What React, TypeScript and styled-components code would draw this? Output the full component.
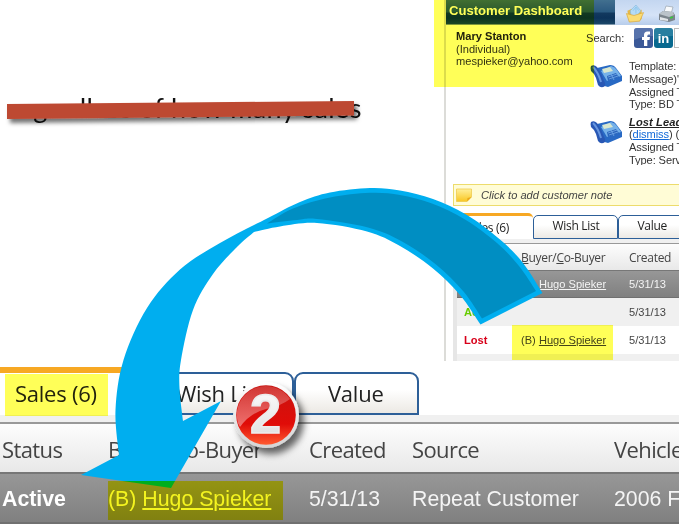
import React from "react";
import styled, { createGlobalStyle } from "styled-components";

const Global = createGlobalStyle`
  html, body { margin: 0; padding: 0; background: #fff; overflow: hidden; }
  * { box-sizing: border-box; }
`;

const arial = `"Liberation Sans", Arial, sans-serif`;
const segoe = `"Open Sans", "Noto Sans", sans-serif`;

const Page = styled.main`
  position: relative;
  width: 679px;
  height: 525px;
  overflow: hidden;
  background: #fff;
  display: flex;
  flex-direction: column;
  isolation: isolate;
  font-family: ${arial};
  white-space: nowrap;
`;

const Upper = styled.section`
  display: flex;
  height: 361px;
  flex: none;
`;

const Caption = styled.div`
  width: 444px;
  flex: none;
  padding: 91px 0 0 9px;
  font: 27px/34px Lato, sans-serif;
  letter-spacing: 0.35px;
  color: #111;
`;

const Dashboard = styled.div`
  width: 235px;
  flex: none;
  overflow: hidden;
  border-left: 2px solid #dcdcd8;
  font-size: 11.1px;
  color: #333;
`;

const TitleBar = styled.header`
  display: flex;
  height: 25px;
`;

const Title = styled.h1`
  margin: 0;
  width: 169px;
  padding-left: 3px;
  font-size: 13.1px;
  line-height: 21px;
  color: #fff;
  background: linear-gradient(#41708f 0, #3a678a 4px, #2a5a80 12px, #12395f 13px, #0c335a 18px, #1a4668 24px, #dfe6ec 25px);
`;

const Toolbar = styled.div`
  flex: 1;
  display: flex;
  gap: 13px;
  padding: 5px 0 0 10px;
  background: linear-gradient(#c3d6f0, #d5e3f7 60%, #b7cdeb);
  svg { flex: none; }
`;

const Details = styled.div`
  display: flex;
  height: 140px;
  overflow: hidden;
`;

const Contact = styled.div`
  width: 140px;
  padding: 5px 0 0 10px;
  line-height: 12.7px;
  strong { color: #222; }
`;

const Activity = styled.div`
  width: 93px;
`;

const SearchLine = styled.div`
  display: flex;
  height: 33px;
  padding-top: 3px;
  gap: 1px;
  line-height: 20px;
  span { width: 47px; flex: none; }
  svg { flex: none; }
`;

const SearchInput = styled.div`
  width: 20px;
  flex: none;
  height: 20px;
  border: 1px solid #bbb;
  background: #fff;
`;

const Task = styled.div`
  display: flex;
  gap: 6px;
  height: 55.5px;
  padding-left: 4px;
  svg { margin-top: 6px; flex: none; }
`;

const TaskLines = styled.div`
  line-height: 12.8px;
  padding-top: 2px;
  letter-spacing: -0.1px;
  div { height: 12.8px; }
  b { color: #222; font-style: italic; text-decoration: underline; letter-spacing: 0.1px; }
  a { color: #1269d8; text-decoration: underline; }
`;

const Note = styled.div`
  display: flex;
  align-items: center;
  gap: 9px;
  height: 22px;
  margin: 19px -2px 0 7px;
  padding-left: 2px;
  border: 1px solid #eddc6c;
  background: #fffcd6;
  font-style: italic;
  color: #444;
`;

const Records = styled.div`
  margin: 7px 0 0 7px;
  height: 148px;
  overflow: hidden;
`;

const Tabs = styled.div<{ $large?: boolean }>`
  display: flex;
  align-items: flex-end;
  height: ${(p) => (p.$large ? 48 : 26)}px;
  font-family: ${segoe};
  font-size: ${(p) => (p.$large ? 22 : 12)}px;
  letter-spacing: ${(p) => (p.$large ? -0.25 : -0.3)}px;
  color: #222;
`;

const Tab = styled.div<{ $w: number; $active?: boolean; $large?: boolean; $pad: number }>`
  flex: none;
  width: ${(p) => p.$w}px;
  padding-left: ${(p) => p.$pad}px;
  height: ${(p) => (p.$large ? (p.$active ? 48 : 43) : p.$active ? 26 : 24)}px;
  line-height: ${(p) => (p.$large ? (p.$active ? 40 : 38) : p.$active ? 23 : 20)}px;
  border: ${(p) => (p.$large ? 2 : 1.5)}px solid #2d5f98;
  border-radius: ${(p) => (p.$large ? "9px 9px 0 0" : "5px 5px 0 0")};
  background: linear-gradient(#fff 40%, #ece9e4);
  ${(p) =>
    p.$active &&
    `border: 0; border-top: ${p.$large ? 6 : 3}px solid #f7a823;
     border-radius: ${p.$large ? 0 : "0 5px 0 0"}; background: #fff;`}
`;

const Grid = styled.div<{ $large?: boolean }>`
  border-top: ${(p) => (p.$large ? 7 : 4)}px solid #f0f0f0;
  border-left: ${(p) => (p.$large ? 0 : 4)}px solid #e6e6e6;
`;

const Row = styled.div<{ $cols: string; $h: number; $kind: "head" | "selected" | "odd" | "even"; $large?: boolean }>`
  display: grid;
  grid-template-columns: ${(p) => p.$cols};
  padding-left: ${(p) => (p.$large ? 2 : 7)}px;
  height: ${(p) => p.$h}px;
  line-height: ${(p) => p.$h}px;
  font-size: ${(p) => (p.$large ? 21.3 : 11.1)}px;
  color: #444;
  ${(p) => p.$kind === "even" && `background: #f0f0f0;`}
  ${(p) => p.$kind === "odd" && `background: #fff;`}
  ${(p) =>
    p.$kind === "head" &&
    `background: linear-gradient(#fdfdfd, #e8e8e8);
     border-top: ${p.$large ? 2 : 1}px solid #999;
     font-family: ${segoe};
     font-size: ${p.$large ? 22 : 12}px;
     letter-spacing: ${p.$large ? -0.6 : -0.3}px;`}
  ${(p) =>
    p.$kind === "selected" &&
    `background: linear-gradient(#979797, #808080);
     border-top: ${p.$large ? 2 : 1}px solid #777;
     border-bottom: ${p.$large ? 2 : 1}px solid #707070;
     line-height: ${p.$large ? p.$h - 2 : p.$h - 2}px;
     color: #f4f4f4;`}
`;

const Status = styled.b<{ $color: string }>`
  color: ${(p) => p.$color};
`;

const Lower = styled.section`
  flex: none;
  height: 164px;
  padding-top: 6px;
  background: #fff;
`;

const Overlay = styled.svg`
  position: absolute;
  inset: 0;
`;

const Marker = styled.div<{ $x: number; $y: number; $w: number; $h: number; $color?: string }>`
  position: absolute;
  left: ${(p) => p.$x}px;
  top: ${(p) => p.$y}px;
  width: ${(p) => p.$w}px;
  height: ${(p) => p.$h}px;
  background: ${(p) => p.$color ?? "#ffff58"};
  mix-blend-mode: multiply;
`;

type Pt = [number, number];

/* Catmull-Rom spline through the points, written as cubic segments. */
function curve(pts: Pt[]): string {
  let d = "";
  for (let i = 0; i < pts.length - 1; i++) {
    const a = pts[i - 1] ?? pts[i];
    const b = pts[i];
    const c = pts[i + 1];
    const e = pts[i + 2] ?? c;
    d += `C${b[0] + (c[0] - a[0]) / 6} ${b[1] + (c[1] - a[1]) / 6} ${c[0] - (e[0] - b[0]) / 6} ${c[1] - (e[1] - b[1]) / 6} ${c[0]} ${c[1]}`;
  }
  return d;
}

const outer: Pt[] = [[542.5, 293], [523, 263], [500, 239.5], [467, 215], [433, 199], [400, 190.5], [370, 188], [330, 192.5], [300, 202], [267, 218.5], [220, 243], [180, 269.5], [147, 308], [123.5, 360], [115.5, 410], [119, 455]];
const inner: Pt[] = [[183, 421], [179.5, 388], [181, 360], [193, 310], [213, 274], [237, 247], [254, 232]];
const underside: Pt[] = [[254, 232], [280, 226.5], [317, 223], [367, 231.5], [400, 246], [433, 268.5], [460, 295], [480.5, 324.5]];
const shadeTop: Pt[] = [[267, 223.5], [293, 208.5], [330, 197.5], [370, 192.8], [400, 195], [432, 203.5], [465, 219.5], [497, 243], [519, 266], [536, 291]];
const shadeBottom: Pt[] = [[482, 318.5], [463.5, 291.5], [436, 264.5], [402, 241.5], [368, 227.5], [317, 219], [297, 220], [267, 223.5]];

const ribbon = `M542.5 293${curve(outer)}L81 475L171 488L221 401L183 421${curve(inner)}${curve(underside)}Z`;
const shade = `M267 223.5${curve(shadeTop)}L482 318.5${curve(shadeBottom)}Z`;

const Arrow = () => (
  <Overlay width="679" height="525">
    <path d={ribbon} fill="#00aeef" />
    <path d={shade} fill="#008ec2" />
  </Overlay>
);

const Strike = () => (
  <Overlay width="679" height="140">
    <defs>
      <filter id="strikeShadow" x="-5%" y="-50%" width="110%" height="250%">
        <feDropShadow dx="3" dy="4" stdDeviation="2" floodColor="#000" floodOpacity=".55" />
      </filter>
    </defs>
    <path d="M7 104L354 101V115.5L7 119Z" fill="#bd4932" filter="url(#strikeShadow)" />
  </Overlay>
);

const StepBadge = () => (
  <Overlay width="679" height="525">
    <defs>
      <filter id="badgeShadow" x="-30%" y="-30%" width="180%" height="180%">
        <feDropShadow dx="5" dy="6" stdDeviation="3.5" floodColor="#000" floodOpacity=".6" />
      </filter>
      <linearGradient id="rim" x1="0" y1="0" x2="0" y2="1">
        <stop offset="0" stopColor="#fff" />
        <stop offset="1" stopColor="#d4d4d4" />
      </linearGradient>
      <linearGradient id="red" x1="0" y1="0" x2="0" y2="1">
        <stop offset="0" stopColor="#c81410" />
        <stop offset=".65" stopColor="#e00c08" />
        <stop offset="1" stopColor="#ff5a30" />
      </linearGradient>
      <linearGradient id="gloss" x1="0" y1="0" x2="0" y2="1">
        <stop offset="0" stopColor="#fff" stopOpacity=".15" />
        <stop offset="1" stopColor="#fff" stopOpacity=".42" />
      </linearGradient>
      <linearGradient id="digit" x1="0" y1="0" x2="0" y2="1">
        <stop offset="0" stopColor="#fff" />
        <stop offset="1" stopColor="#dcdcdc" />
      </linearGradient>
    </defs>
    <circle cx="266" cy="415" r="33" fill="url(#rim)" filter="url(#badgeShadow)" />
    <circle cx="266" cy="415" r="29.8" fill="url(#red)" />
    <path d="M237 418A29 29 0 0 1 290 399Q281 406 266 409Q250 413 240 427Q237 423 237 418Z" fill="url(#gloss)" />
    <text x="265.5" y="433" textAnchor="middle" fontFamily="Liberation Sans, sans-serif" fontWeight="700" fontSize="56" fill="url(#digit)" stroke="#ececec" strokeWidth="1.6">2</text>
  </Overlay>
);

const Phone = () => (
  <svg width="33" height="25" viewBox="0 0 33 25">
    <path d="M7 4L20 1Q24 1 26 4L32 12V17L18 23L11 21Z" fill="#2869c4" />
    <path d="M11 7L21 2Q25 3 27 6L31 12L17 17Z" fill="#75b1e9" />
    <path d="M12 5L20 3L23 7L14 9Z" fill="#d8e7cf" />
    <path d="M17 12L26 9L29 13L18 17Z" fill="#2a65bc" />
    <path d="M18 13L27 10M19 15L28 12M21 10L24 16" stroke="#72a9e8" strokeWidth=".8" />
    <path d="M1 2Q4 0 7 3Q12 10 14 17Q16 19 15 22Q11 25 8 21L6 14Q4 9 1 7Q0 4 1 2Z" fill="#2857b4" />
    <path d="M3 3Q8 8 11 18" fill="none" stroke="#6796df" strokeWidth="2" />
  </svg>
);

const Folder = () => (
  <svg width="20" height="19" viewBox="0 0 20 20">
    <path d="M2 6L7 4L9 6L17 5V15L4 18Z" fill="#e6b845" />
    <path d="M5 6L11 0L16 6L12 12L6 12Z" fill="#b6dcf5" stroke="#86b9df" strokeWidth=".7" />
    <path d="M8 6L11 2L14 6M11 3V9" fill="none" stroke="#8fc6ee" />
    <path d="M1 9L4 18L15 17L19 8L9 11Z" fill="#fbdc73" stroke="#d8a63a" strokeWidth=".7" />
  </svg>
);

const Printer = () => (
  <svg width="18" height="18" viewBox="0 0 18 18">
    <path d="M6 7L8 1L15 2L13 9Z" fill="#f8fafc" stroke="#99a4ae" strokeWidth=".7" />
    <path d="M1 9L5 6L15 7L17 10V15L11 17L1 15Z" fill="#7c858d" />
    <path d="M1 9L5 6L15 7L16 10L11 12Z" fill="#bbc3ca" />
    <path d="M2 12L10 14V16L2 15Z" fill="#e2e5e8" />
    <path d="M12 13L15 12" stroke="#38c83d" strokeWidth="1.8" />
  </svg>
);

const Facebook = () => (
  <svg width="19" height="20" viewBox="0 0 19 20">
    <rect width="19" height="20" rx="3" fill="#3b5998" />
    <path d="M0 3Q0 0 3 0H16Q19 0 19 3V8Q9 8 0 12Z" fill="#6f89bd" opacity=".55" />
    <path d="M10 18V12H8V9H10V7Q10 3.5 13.5 3.5H16V6.5H14.5Q13.3 6.5 13.3 8V9H16L15.5 12H13.3V18Z" fill="#fff" />
  </svg>
);

const LinkedIn = () => (
  <svg width="19" height="20" viewBox="0 0 19 20">
    <rect width="19" height="20" rx="3" fill="#08698f" />
    <path d="M0 3Q0 0 3 0H16Q19 0 19 3V8Q9 8 0 12Z" fill="#5aa0b9" opacity=".4" />
    <text x="9.5" y="15" textAnchor="middle" fontFamily="Liberation Sans, sans-serif" fontWeight="700" fontSize="13" fill="#fff">in</text>
  </svg>
);

const StickyNote = () => (
  <svg width="16" height="15" viewBox="0 0 16 15">
    <defs>
      <linearGradient id="paper" x1="0" y1="0" x2="0" y2="1">
        <stop offset="0" stopColor="#fff09a" />
        <stop offset="1" stopColor="#f9c722" />
      </linearGradient>
    </defs>
    <path d="M.5 1H15.5V9L11 13.5H.5Z" fill="url(#paper)" stroke="#edc746" strokeWidth=".7" />
    <path d="M11 13.5L11.5 10L15.5 9Z" fill="#eba81a" />
  </svg>
);

const smallCols = "57px 108px 1fr";
const largeCols = "106px 201px 103px 202px 1fr";

export default function App() {
  return (
    <Page>
      <Global />
      <Upper>
        <Caption>regardless of how many sales</Caption>
        <Dashboard>
          <TitleBar>
            <Title>Customer Dashboard</Title>
            <Toolbar>
              <Folder />
              <Printer />
            </Toolbar>
          </TitleBar>
          <Details>
            <Contact>
              <strong>Mary Stanton</strong>
              <div>(Individual)</div>
              <div>mespieker@yahoo.com</div>
            </Contact>
            <Activity>
              <SearchLine>
                <span>Search:</span>
                <Facebook />
                <LinkedIn />
                <SearchInput />
              </SearchLine>
              <Task>
                <Phone />
                <TaskLines>
                  <div>Template:</div>
                  <div>Message)"</div>
                  <div>Assigned T</div>
                  <div>Type: BD T</div>
                </TaskLines>
              </Task>
              <Task>
                <Phone />
                <TaskLines>
                  <div><b>Lost Lead</b></div>
                  <div>(<a>dismiss</a>) (</div>
                  <div>Assigned T</div>
                  <div>Type: Serv</div>
                </TaskLines>
              </Task>
            </Activity>
          </Details>
          <Note>
            <StickyNote />
            Click to add customer note
          </Note>
          <Records>
            <Tabs>
              <Tab $w={80} $pad={13} $active>Sales (6)</Tab>
              <Tab $w={85} $pad={18.5}>Wish List</Tab>
              <Tab $w={85} $pad={18.5}>Value</Tab>
            </Tabs>
            <Grid>
              <Row $kind="head" $cols={smallCols} $h={27}>
                <span>Status</span>
                <span><u>B</u>uyer/<u>C</u>o-Buyer</span>
                <span>Created</span>
              </Row>
              <Row $kind="selected" $cols={smallCols} $h={28}>
                <Status $color="#fff">Active</Status>
                <span>(B) <u>Hugo Spieker</u></span>
                <span>5/31/13</span>
              </Row>
              <Row $kind="even" $cols={smallCols} $h={28}>
                <Status $color="#66cc00">Active</Status>
                <span />
                <span>5/31/13</span>
              </Row>
              <Row $kind="odd" $cols={smallCols} $h={28}>
                <Status $color="#d8001a">Lost</Status>
                <span>(B) <u>Hugo Spieker</u></span>
                <span>5/31/13</span>
              </Row>
              <Row $kind="even" $cols={smallCols} $h={28} />
            </Grid>
          </Records>
        </Dashboard>
      </Upper>
      <Lower>
        <Tabs $large>
          <Tab $large $w={140} $pad={15} $active>Sales (6)</Tab>
          <Tab $large $w={154} $pad={34}>Wish List</Tab>
          <Tab $large $w={125} $pad={32}>Value</Tab>
        </Tabs>
        <Grid $large>
          <Row $large $kind="head" $cols={largeCols} $h={50}>
            <span>Status</span>
            <span>Buyer/Co-Buyer</span>
            <span>Created</span>
            <span>Source</span>
            <span>Vehicle</span>
          </Row>
          <Row $large $kind="selected" $cols={largeCols} $h={52}>
            <Status $color="#fff">Active</Status>
            <span>(B) <u>Hugo Spieker</u></span>
            <span>5/31/13</span>
            <span>Repeat Customer</span>
            <span>2006 Fo</span>
          </Row>
        </Grid>
      </Lower>
      <Strike />
      <Arrow />
      <StepBadge />
      <Marker $x={434} $y={0} $w={160} $h={87} />
      <Marker $x={512} $y={325} $w={101} $h={35} />
      <Marker $x={5} $y={374} $w={103} $h={42} />
      <Marker $x={108} $y={481} $w={175} $h={39} $color="#ffff20" />
    </Page>
  );
}
